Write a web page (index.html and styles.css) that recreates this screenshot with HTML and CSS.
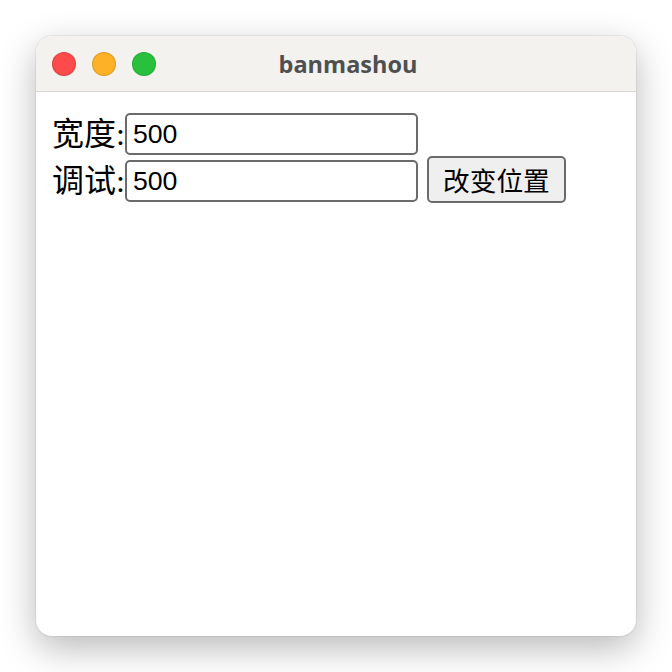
FILE: index.html
```html
<!DOCTYPE html>
<html lang="zh-CN">
<head>
    <meta charset="UTF-8">
    <meta name="viewport" content="width=device-width, initial-scale=1.0">
    <title>banmashou</title>
    <link rel="stylesheet" href="styles.css">
</head>
<body>
    <div class="window">
        <div class="title-bar">
            <div class="lights">
                <span class="light red"></span>
                <span class="light yellow"></span>
                <span class="light green"></span>
            </div>
            <div class="title">banmashou</div>
        </div>

        <div class="content">
            <div class="row">
                <label class="label">宽度:</label>
                <input class="field" type="text" value="500">
            </div>
            <div class="row second">
                <label class="label">调试:</label>
                <input class="field" type="text" value="500">
                <button class="btn">改变位置</button>
            </div>
        </div>
    </div>
</body>
</html>
```

FILE: styles.css
```css
body {
    margin: 0;
    background-color: #ffffff;
    padding: 36px;
}

.window {
    width: 600px;
    height: 600px;
    background-color: #ffffff;
    border-radius: 16px;
    overflow: hidden;
    box-shadow: 0 12px 36px rgba(0, 0, 0, 0.28), 0 0 0 1px rgba(0, 0, 0, 0.06);
}

.title-bar {
    height: 55px;
    display: flex;
    align-items: center;
    background-color: #f3f2ef;
    border-bottom: 1px solid #d9d8d6;
}

.lights {
    display: flex;
    gap: 16px;
    padding-left: 16px;
}

.light {
    width: 22px;
    height: 22px;
    border-radius: 50%;
    border: 1px solid rgba(0, 0, 0, 0.12);
}

.light.red { background-color: #fd4a4b; }
.light.yellow { background-color: #fdb127; }
.light.green { background-color: #28c03c; }

.title {
    flex: 1;
    padding-right: 96px;
    text-align: center;
    font-family: "Open Sans", "Noto Sans", sans-serif;
    font-weight: 700;
    font-size: 23.5px;
    color: #4f4f4f;
}

.content {
    padding: 21px 16px 0 16px;
    display: flex;
    flex-direction: column;
    gap: 1px;
}

/* 各行の高さは固定、中身は上揃え */
.row {
    display: flex;
    align-items: flex-start;
    height: 42px;
}

.row.second {
    height: 47px;
}

.row.second .field {
    margin-top: 4px;
}

.label {
    font-family: "Liberation Serif", "Noto Sans CJK SC", serif;
    font-size: 32px;
    line-height: 42px;
    color: #000;
}

.row.second .label {
    line-height: 50px;
}

.field {
    width: 293px;
    height: 42px;
    box-sizing: border-box;
    border: 2px solid #6b6b6b;
    border-radius: 5px;
    padding: 0 6px;
    font-family: "Liberation Sans", Arial, sans-serif;
    font-size: 26.7px;
    color: #000;
    background: #fff;
}

.btn {
    margin-left: 9px;
    width: 139px;
    height: 47px;
    box-sizing: border-box;
    border: 2px solid #6b6b6b;
    border-radius: 5px;
    background-color: #efefef;
    font-family: "Liberation Sans", "Noto Sans CJK SC", sans-serif;
    font-size: 26.7px;
    color: #000;
    padding: 0;
}
```
